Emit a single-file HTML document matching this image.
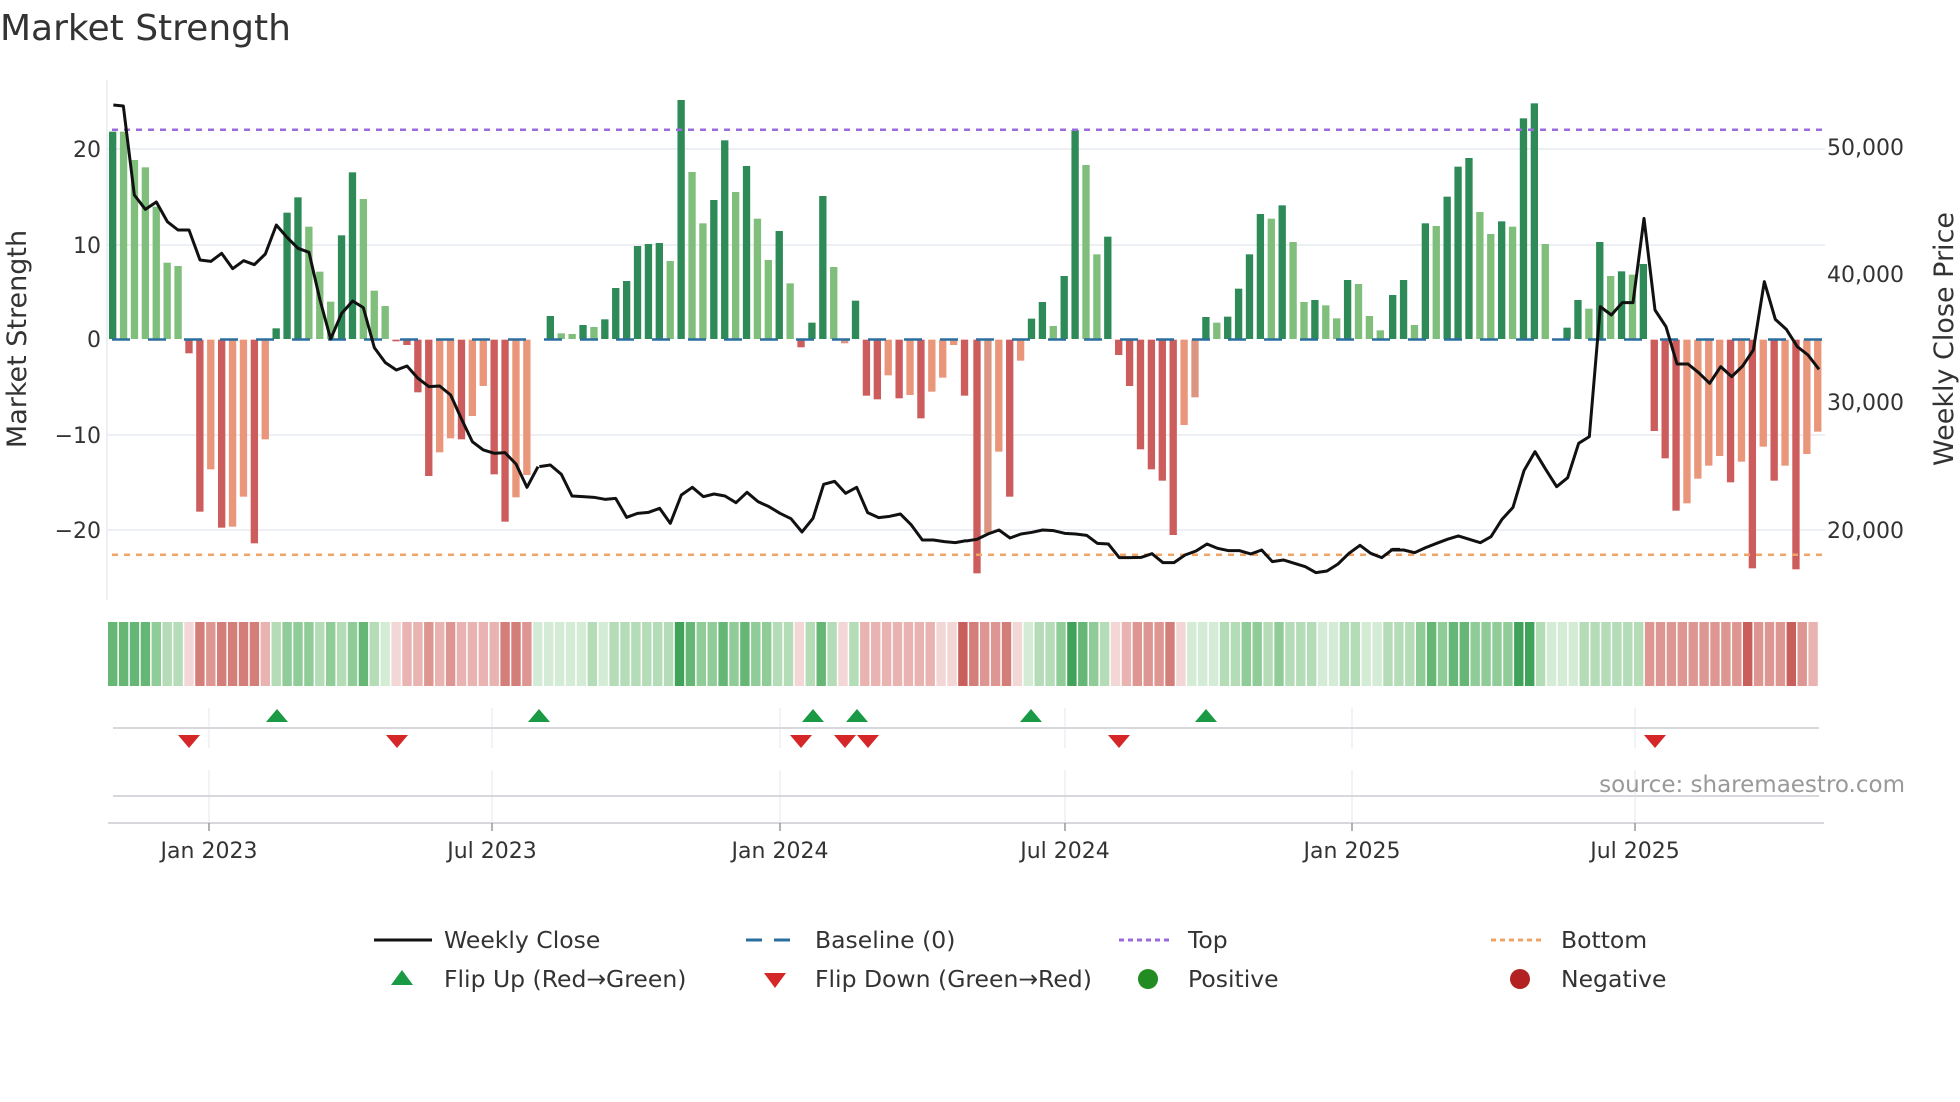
<!DOCTYPE html>
<html><head><meta charset="utf-8"><style>
html,body{margin:0;padding:0;background:#fff}
svg{display:block}
text{font-family:"DejaVu Sans","Liberation Sans",sans-serif;fill:#333}
.D{fill:#2e8b57}.L{fill:#7fbf7b}.R{fill:#cd5c5c}.O{fill:#e9967a}.S{fill:#dc9580}
.g1{fill:#d4ecd6}.g2{fill:#b3dcb7}.g3{fill:#8fcc97}.g4{fill:#66b676}.g5{fill:#41a359}
.r1{fill:#f3d6d6}.r2{fill:#e9b3b1}.r3{fill:#de9692}.r4{fill:#d47e79}.r5{fill:#c95f5a}
</style></head><body>
<svg width="1960" height="1102" viewBox="0 0 1960 1102" xmlns="http://www.w3.org/2000/svg">
<text x="0" y="40" font-size="36">Market Strength</text>

<g stroke="#eceff4" stroke-width="2">
<line x1="107" y1="149" x2="1825" y2="149"/><line x1="107" y1="245" x2="1825" y2="245"/>
<line x1="107" y1="435" x2="1825" y2="435"/><line x1="107" y1="530" x2="1825" y2="530"/>
</g>
<line x1="107" y1="80" x2="107" y2="600" stroke="#eceff4" stroke-width="2"/>

<g transform="translate(100,80) scale(0.33333)">
<rect class="D" x="27" y="155" width="22" height="622"/>
<rect class="L" x="59.7" y="155" width="22" height="622"/>
<rect class="L" x="92.4" y="240" width="22" height="537"/>
<rect class="L" x="125.1" y="262" width="22" height="515"/>
<rect class="L" x="157.8" y="380" width="22" height="397"/>
<rect class="L" x="190.5" y="548" width="22" height="229"/>
<rect class="L" x="223.2" y="558" width="22" height="219"/>
<rect class="R" x="255.9" y="779" width="22" height="41"/>
<rect class="R" x="288.6" y="779" width="22" height="516"/>
<rect class="O" x="321.3" y="779" width="22" height="389"/>
<rect class="R" x="354" y="779" width="22" height="564"/>
<rect class="O" x="386.7" y="779" width="22" height="561"/>
<rect class="O" x="419.4" y="779" width="22" height="471"/>
<rect class="R" x="452.1" y="779" width="22" height="611"/>
<rect class="O" x="484.8" y="779" width="22" height="299"/>
<rect class="D" x="517.5" y="745" width="22" height="32"/>
<rect class="D" x="550.2" y="398" width="22" height="379"/>
<rect class="D" x="582.9" y="352" width="22" height="425"/>
<rect class="L" x="615.6" y="440" width="22" height="337"/>
<rect class="L" x="648.3" y="575" width="22" height="202"/>
<rect class="L" x="681" y="665" width="22" height="112"/>
<rect class="D" x="713.7" y="466" width="22" height="311"/>
<rect class="D" x="746.4" y="277" width="22" height="500"/>
<rect class="L" x="779.1" y="357" width="22" height="420"/>
<rect class="L" x="811.8" y="632" width="22" height="145"/>
<rect class="L" x="844.5" y="678" width="22" height="99"/>
<rect class="R" x="877.2" y="779" width="22" height="5"/>
<rect class="R" x="909.9" y="779" width="22" height="16"/>
<rect class="R" x="942.6" y="779" width="22" height="158"/>
<rect class="R" x="975.3" y="779" width="22" height="409"/>
<rect class="O" x="1008" y="779" width="22" height="338"/>
<rect class="O" x="1040.7" y="779" width="22" height="296"/>
<rect class="R" x="1073.4" y="779" width="22" height="299"/>
<rect class="O" x="1106.1" y="779" width="22" height="229"/>
<rect class="O" x="1138.8" y="779" width="22" height="139"/>
<rect class="R" x="1171.5" y="779" width="22" height="404"/>
<rect class="R" x="1204.2" y="779" width="22" height="546"/>
<rect class="O" x="1236.9" y="779" width="22" height="473"/>
<rect class="O" x="1269.6" y="779" width="22" height="406"/>
</g>
<g transform="translate(530,80) scale(0.33333)">
<rect class="D" x="50" y="708" width="22" height="69"/>
<rect class="L" x="82.7" y="760" width="22" height="17"/>
<rect class="L" x="115.4" y="762" width="22" height="15"/>
<rect class="D" x="148.1" y="735" width="22" height="42"/>
<rect class="L" x="180.8" y="741" width="22" height="36"/>
<rect class="D" x="213.5" y="718" width="22" height="59"/>
<rect class="D" x="246.2" y="624" width="22" height="153"/>
<rect class="D" x="278.9" y="603" width="22" height="174"/>
<rect class="D" x="311.6" y="498" width="22" height="279"/>
<rect class="D" x="344.3" y="492" width="22" height="285"/>
<rect class="D" x="377" y="489" width="22" height="288"/>
<rect class="L" x="409.7" y="543" width="22" height="234"/>
<rect class="D" x="442.4" y="60" width="22" height="717"/>
<rect class="L" x="475.1" y="276" width="22" height="501"/>
<rect class="L" x="507.8" y="430" width="22" height="347"/>
<rect class="D" x="540.5" y="360" width="22" height="417"/>
<rect class="D" x="573.2" y="181" width="22" height="596"/>
<rect class="L" x="605.9" y="336" width="22" height="441"/>
<rect class="D" x="638.6" y="258" width="22" height="519"/>
<rect class="L" x="671.3" y="416" width="22" height="361"/>
<rect class="L" x="704" y="540" width="22" height="237"/>
<rect class="D" x="736.7" y="453" width="22" height="324"/>
<rect class="L" x="769.4" y="610" width="22" height="167"/>
<rect class="R" x="802.1" y="779" width="22" height="23"/>
<rect class="D" x="834.8" y="728" width="22" height="49"/>
<rect class="D" x="867.5" y="348" width="22" height="429"/>
<rect class="L" x="900.2" y="561" width="22" height="216"/>
<rect class="S" x="932.9" y="779" width="22" height="11"/>
<rect class="D" x="965.6" y="662" width="22" height="115"/>
<rect class="R" x="998.3" y="779" width="22" height="168"/>
<rect class="R" x="1031" y="779" width="22" height="179"/>
<rect class="O" x="1063.7" y="779" width="22" height="107"/>
<rect class="R" x="1096.4" y="779" width="22" height="176"/>
<rect class="O" x="1129.1" y="779" width="22" height="166"/>
<rect class="R" x="1161.8" y="779" width="22" height="236"/>
<rect class="O" x="1194.5" y="779" width="22" height="156"/>
<rect class="O" x="1227.2" y="779" width="22" height="114"/>
<rect class="O" x="1259.9" y="779" width="22" height="16"/>
<rect class="R" x="1292.6" y="779" width="22" height="168"/>
</g>
<g transform="translate(960,80) scale(0.33333)">
<rect class="R" x="40" y="779" width="22" height="701"/>
<rect class="S" x="72.7" y="779" width="22" height="581"/>
<rect class="O" x="105.4" y="779" width="22" height="336"/>
<rect class="R" x="138.1" y="779" width="22" height="471"/>
<rect class="O" x="170.8" y="779" width="22" height="63"/>
<rect class="D" x="203.5" y="716" width="22" height="61"/>
<rect class="D" x="236.2" y="666" width="22" height="111"/>
<rect class="L" x="268.9" y="738" width="22" height="39"/>
<rect class="D" x="301.6" y="588" width="22" height="189"/>
<rect class="D" x="334.3" y="150" width="22" height="627"/>
<rect class="L" x="367" y="255" width="22" height="522"/>
<rect class="L" x="399.7" y="523" width="22" height="254"/>
<rect class="D" x="432.4" y="470" width="22" height="307"/>
<rect class="R" x="465.1" y="779" width="22" height="46"/>
<rect class="R" x="497.8" y="779" width="22" height="139"/>
<rect class="R" x="530.5" y="779" width="22" height="329"/>
<rect class="R" x="563.2" y="779" width="22" height="389"/>
<rect class="R" x="595.9" y="779" width="22" height="423"/>
<rect class="R" x="628.6" y="779" width="22" height="586"/>
<rect class="O" x="661.3" y="779" width="22" height="256"/>
<rect class="S" x="694" y="779" width="22" height="173"/>
<rect class="D" x="726.7" y="711" width="22" height="66"/>
<rect class="L" x="759.4" y="728" width="22" height="49"/>
<rect class="D" x="792.1" y="710" width="22" height="67"/>
<rect class="D" x="824.8" y="626" width="22" height="151"/>
<rect class="D" x="857.5" y="523" width="22" height="254"/>
<rect class="D" x="890.2" y="402" width="22" height="375"/>
<rect class="L" x="922.9" y="416" width="22" height="361"/>
<rect class="D" x="955.6" y="376" width="22" height="401"/>
<rect class="L" x="988.3" y="486" width="22" height="291"/>
<rect class="L" x="1021" y="666" width="22" height="111"/>
<rect class="D" x="1053.7" y="660" width="22" height="117"/>
<rect class="L" x="1086.4" y="676" width="22" height="101"/>
<rect class="L" x="1119.1" y="715" width="22" height="62"/>
<rect class="D" x="1151.8" y="600" width="22" height="177"/>
<rect class="L" x="1184.5" y="612" width="22" height="165"/>
<rect class="L" x="1217.2" y="708" width="22" height="69"/>
<rect class="L" x="1249.9" y="751" width="22" height="26"/>
</g>
<g transform="translate(1390,80) scale(0.33333)">
<rect class="D" x="-3" y="645" width="22" height="132"/>
<rect class="D" x="29.7" y="600" width="22" height="177"/>
<rect class="L" x="62.4" y="735" width="22" height="42"/>
<rect class="D" x="95.1" y="430" width="22" height="347"/>
<rect class="L" x="127.8" y="438" width="22" height="339"/>
<rect class="D" x="160.5" y="350" width="22" height="427"/>
<rect class="D" x="193.2" y="260" width="22" height="517"/>
<rect class="D" x="225.9" y="234" width="22" height="543"/>
<rect class="L" x="258.6" y="396" width="22" height="381"/>
<rect class="L" x="291.3" y="462" width="22" height="315"/>
<rect class="D" x="324" y="424" width="22" height="353"/>
<rect class="L" x="356.7" y="440" width="22" height="337"/>
<rect class="D" x="389.4" y="115" width="22" height="662"/>
<rect class="D" x="422.1" y="70" width="22" height="707"/>
<rect class="L" x="454.8" y="492" width="22" height="285"/>
<rect class="D" x="520.2" y="743" width="22" height="34"/>
<rect class="D" x="552.9" y="660" width="22" height="117"/>
<rect class="L" x="585.6" y="686" width="22" height="91"/>
<rect class="D" x="618.3" y="486" width="22" height="291"/>
<rect class="L" x="651" y="588" width="22" height="189"/>
<rect class="D" x="683.7" y="574" width="22" height="203"/>
<rect class="L" x="716.4" y="584" width="22" height="193"/>
<rect class="D" x="749.1" y="552" width="22" height="225"/>
<rect class="R" x="781.8" y="779" width="22" height="274"/>
<rect class="R" x="814.5" y="779" width="22" height="356"/>
<rect class="R" x="847.2" y="779" width="22" height="513"/>
<rect class="O" x="879.9" y="779" width="22" height="491"/>
<rect class="O" x="912.6" y="779" width="22" height="417"/>
<rect class="O" x="945.3" y="779" width="22" height="378"/>
<rect class="O" x="978" y="779" width="22" height="349"/>
<rect class="R" x="1010.7" y="779" width="22" height="428"/>
<rect class="O" x="1043.4" y="779" width="22" height="366"/>
<rect class="R" x="1076.1" y="779" width="22" height="686"/>
<rect class="O" x="1108.8" y="779" width="22" height="321"/>
<rect class="R" x="1141.5" y="779" width="22" height="423"/>
<rect class="O" x="1174.2" y="779" width="22" height="378"/>
<rect class="R" x="1206.9" y="779" width="22" height="689"/>
<rect class="O" x="1239.6" y="779" width="22" height="343"/>
<rect class="O" x="1272.3" y="779" width="22" height="276"/>
</g>

<line x1="112" y1="339.5" x2="1822" y2="339.5" stroke="#2b6f9f" stroke-width="2.5" stroke-dasharray="18 18"/>
<line x1="112" y1="129.7" x2="1822" y2="129.7" stroke="#9b6bdc" stroke-width="2.5" stroke-dasharray="6 6"/>
<line x1="112" y1="554.7" x2="1822" y2="554.7" stroke="#f0a566" stroke-width="2.5" stroke-dasharray="6 6"/>

<g fill="none" stroke="#111" stroke-width="3" stroke-linejoin="round">
<polyline transform="translate(100,80) scale(0.33333)" vector-effect="non-scaling-stroke" points="40,75 70,78 103,345 136,388 169,366 202,425 234,450 267,450 300,540 333,544 365,520 398,566 431,542 463,554 496,522 529,435 561,472 594,505 627,517 660,660 692,777 725,700 758,663 790,683 823,803 856,848 889,870 921,858 954,895 987,920 1019,918 1052,945 1085,1018 1117,1085 1150,1110 1183,1120 1215,1118 1248,1152 1281,1222 1314,1160"/>
<polyline transform="translate(530,80) scale(0.33333)" vector-effect="non-scaling-stroke" points="28,1160 61,1155 94,1183 126,1248 159,1250 192,1252 225,1258 257,1255 290,1312 323,1300 356,1297 389,1285 421,1330 454,1245 487,1222 520,1250 552,1242 585,1248 618,1268 651,1237 684,1265 717,1280 750,1300 783,1316 816,1356 849,1315 881,1213 914,1204 947,1240 980,1222 1013,1298 1046,1313 1079,1309 1111,1302 1144,1335 1177,1380 1210,1380 1243,1385 1276,1388 1309,1382"/>
<polyline transform="translate(960,80) scale(0.33333)" vector-effect="non-scaling-stroke" points="18,1383 51,1378 84,1362 117,1350 150,1374 183,1362 216,1357 248,1350 281,1352 314,1360 347,1362 380,1366 412,1390 445,1392 478,1433 511,1433 544,1432 576,1421 609,1448 642,1448 675,1425 708,1413 741,1392 773,1405 806,1412 839,1412 872,1422 905,1410 937,1445 970,1440 1003,1450 1036,1460 1068,1478 1101,1473 1134,1452 1167,1420 1200,1396 1232,1420 1265,1433 1298,1408 1320,1408"/>
<polyline transform="translate(1390,80) scale(0.33333)" vector-effect="non-scaling-stroke" points="0,1410 41,1410 74,1418 107,1403 140,1390 172,1378 205,1368 238,1378 271,1388 303,1370 336,1318 369,1282 402,1172 435,1115 467,1168 500,1220 533,1193 566,1090 598,1070 631,680 664,705 697,668 729,668 762,415 795,690 828,740 861,852 894,852 926,878 959,910 992,860 1025,890 1058,858 1090,810 1123,605 1156,718 1189,748 1222,800 1254,825 1287,868"/>
</g>

<g font-size="22" text-anchor="end">
<text x="101" y="157">20</text><text x="101" y="253">10</text><text x="101" y="347">0</text>
<text x="101" y="443">−10</text><text x="101" y="538">−20</text>
</g>
<g font-size="22">
<text x="1827" y="155">50,000</text><text x="1827" y="282">40,000</text>
<text x="1827" y="410">30,000</text><text x="1827" y="538">20,000</text>
</g>
<text transform="translate(26,339) rotate(-90)" font-size="27" text-anchor="middle">Market Strength</text>
<text transform="translate(1953,339) rotate(-90)" font-size="27" text-anchor="middle">Weekly Close Price</text>

<g transform="translate(108,622)">
<rect class="g4" x="0" width="9.4" height="64"/><rect class="g4" x="10.9" width="9.4" height="64"/><rect class="g4" x="21.8" width="9.4" height="64"/><rect class="g4" x="32.7" width="9.4" height="64"/><rect class="g3" x="43.6" width="9.4" height="64"/><rect class="g2" x="54.5" width="9.4" height="64"/><rect class="g2" x="65.4" width="9.4" height="64"/><rect class="r1" x="76.3" width="9.4" height="64"/><rect class="r4" x="87.2" width="9.4" height="64"/><rect class="r3" x="98.1" width="9.4" height="64"/>
<rect class="r4" x="109" width="9.4" height="64"/><rect class="r4" x="119.9" width="9.4" height="64"/><rect class="r4" x="130.8" width="9.4" height="64"/><rect class="r4" x="141.7" width="9.4" height="64"/><rect class="r2" x="152.6" width="9.4" height="64"/><rect class="g2" x="163.5" width="9.4" height="64"/><rect class="g3" x="174.4" width="9.4" height="64"/><rect class="g3" x="185.3" width="9.4" height="64"/><rect class="g3" x="196.2" width="9.4" height="64"/><rect class="g2" x="207.1" width="9.4" height="64"/>
<rect class="g3" x="218" width="9.4" height="64"/><rect class="g2" x="228.9" width="9.4" height="64"/><rect class="g3" x="239.8" width="9.4" height="64"/><rect class="g4" x="250.7" width="9.4" height="64"/><rect class="g2" x="261.6" width="9.4" height="64"/><rect class="g1" x="272.5" width="9.4" height="64"/><rect class="r1" x="283.4" width="9.4" height="64"/><rect class="r2" x="294.3" width="9.4" height="64"/><rect class="r2" x="305.2" width="9.4" height="64"/><rect class="r3" x="316.1" width="9.4" height="64"/>
<rect class="r2" x="327" width="9.4" height="64"/><rect class="r3" x="337.9" width="9.4" height="64"/><rect class="r2" x="348.8" width="9.4" height="64"/><rect class="r2" x="359.7" width="9.4" height="64"/><rect class="r2" x="370.6" width="9.4" height="64"/><rect class="r2" x="381.5" width="9.4" height="64"/><rect class="r4" x="392.4" width="9.4" height="64"/><rect class="r4" x="403.3" width="9.4" height="64"/><rect class="r3" x="414.2" width="9.4" height="64"/><rect class="g1" x="425.1" width="9.4" height="64"/>
<rect class="g1" x="436" width="9.4" height="64"/><rect class="g1" x="446.9" width="9.4" height="64"/><rect class="g1" x="457.8" width="9.4" height="64"/><rect class="g1" x="468.7" width="9.4" height="64"/><rect class="g2" x="479.6" width="9.4" height="64"/><rect class="g1" x="490.5" width="9.4" height="64"/><rect class="g2" x="501.4" width="9.4" height="64"/><rect class="g2" x="512.3" width="9.4" height="64"/><rect class="g2" x="523.2" width="9.4" height="64"/><rect class="g2" x="534.1" width="9.4" height="64"/>
<rect class="g2" x="545" width="9.4" height="64"/><rect class="g2" x="555.9" width="9.4" height="64"/><rect class="g5" x="566.8" width="9.4" height="64"/><rect class="g4" x="577.7" width="9.4" height="64"/><rect class="g3" x="588.6" width="9.4" height="64"/><rect class="g3" x="599.5" width="9.4" height="64"/><rect class="g4" x="610.4" width="9.4" height="64"/><rect class="g3" x="621.3" width="9.4" height="64"/><rect class="g4" x="632.2" width="9.4" height="64"/><rect class="g3" x="643.1" width="9.4" height="64"/>
<rect class="g3" x="654" width="9.4" height="64"/><rect class="g2" x="664.9" width="9.4" height="64"/><rect class="g2" x="675.8" width="9.4" height="64"/><rect class="r1" x="686.7" width="9.4" height="64"/><rect class="g2" x="697.6" width="9.4" height="64"/><rect class="g4" x="708.5" width="9.4" height="64"/><rect class="g2" x="719.4" width="9.4" height="64"/><rect class="r1" x="730.3" width="9.4" height="64"/><rect class="g2" x="741.2" width="9.4" height="64"/><rect class="r2" x="752.1" width="9.4" height="64"/>
<rect class="r2" x="763" width="9.4" height="64"/><rect class="r2" x="773.9" width="9.4" height="64"/><rect class="r2" x="784.8" width="9.4" height="64"/><rect class="r2" x="795.7" width="9.4" height="64"/><rect class="r2" x="806.6" width="9.4" height="64"/><rect class="r2" x="817.5" width="9.4" height="64"/><rect class="r1" x="828.4" width="9.4" height="64"/><rect class="r1" x="839.3" width="9.4" height="64"/><rect class="r5" x="850.2" width="9.4" height="64"/><rect class="r4" x="861.1" width="9.4" height="64"/>
<rect class="r3" x="872" width="9.4" height="64"/><rect class="r3" x="882.9" width="9.4" height="64"/><rect class="r4" x="893.8" width="9.4" height="64"/><rect class="r1" x="904.7" width="9.4" height="64"/><rect class="g1" x="915.6" width="9.4" height="64"/><rect class="g2" x="926.5" width="9.4" height="64"/><rect class="g2" x="937.4" width="9.4" height="64"/><rect class="g3" x="948.3" width="9.4" height="64"/><rect class="g5" x="959.2" width="9.4" height="64"/><rect class="g4" x="970.1" width="9.4" height="64"/>
<rect class="g3" x="981" width="9.4" height="64"/><rect class="g2" x="991.9" width="9.4" height="64"/><rect class="r1" x="1002.8" width="9.4" height="64"/><rect class="r2" x="1013.7" width="9.4" height="64"/><rect class="r3" x="1024.6" width="9.4" height="64"/><rect class="r3" x="1035.5" width="9.4" height="64"/><rect class="r3" x="1046.4" width="9.4" height="64"/><rect class="r4" x="1057.3" width="9.4" height="64"/><rect class="r1" x="1068.2" width="9.4" height="64"/><rect class="g1" x="1079.1" width="9.4" height="64"/>
<rect class="g1" x="1090" width="9.4" height="64"/><rect class="g1" x="1100.9" width="9.4" height="64"/><rect class="g2" x="1111.8" width="9.4" height="64"/><rect class="g2" x="1122.7" width="9.4" height="64"/><rect class="g3" x="1133.6" width="9.4" height="64"/><rect class="g3" x="1144.5" width="9.4" height="64"/><rect class="g2" x="1155.4" width="9.4" height="64"/><rect class="g3" x="1166.3" width="9.4" height="64"/><rect class="g2" x="1177.2" width="9.4" height="64"/><rect class="g2" x="1188.1" width="9.4" height="64"/>
<rect class="g2" x="1199" width="9.4" height="64"/><rect class="g1" x="1209.9" width="9.4" height="64"/><rect class="g1" x="1220.8" width="9.4" height="64"/><rect class="g2" x="1231.7" width="9.4" height="64"/><rect class="g2" x="1242.6" width="9.4" height="64"/><rect class="g1" x="1253.5" width="9.4" height="64"/><rect class="g1" x="1264.4" width="9.4" height="64"/><rect class="g2" x="1275.3" width="9.4" height="64"/><rect class="g2" x="1286.2" width="9.4" height="64"/><rect class="g2" x="1297.1" width="9.4" height="64"/>
<rect class="g3" x="1308" width="9.4" height="64"/><rect class="g4" x="1318.9" width="9.4" height="64"/><rect class="g3" x="1329.8" width="9.4" height="64"/><rect class="g4" x="1340.7" width="9.4" height="64"/><rect class="g4" x="1351.6" width="9.4" height="64"/><rect class="g3" x="1362.5" width="9.4" height="64"/><rect class="g3" x="1373.4" width="9.4" height="64"/><rect class="g3" x="1384.3" width="9.4" height="64"/><rect class="g3" x="1395.2" width="9.4" height="64"/><rect class="g5" x="1406.1" width="9.4" height="64"/>
<rect class="g5" x="1417" width="9.4" height="64"/><rect class="g2" x="1427.9" width="9.4" height="64"/><rect class="g1" x="1438.8" width="9.4" height="64"/><rect class="g1" x="1449.7" width="9.4" height="64"/><rect class="g1" x="1460.6" width="9.4" height="64"/><rect class="g2" x="1471.5" width="9.4" height="64"/><rect class="g2" x="1482.4" width="9.4" height="64"/><rect class="g2" x="1493.3" width="9.4" height="64"/><rect class="g2" x="1504.2" width="9.4" height="64"/><rect class="g2" x="1515.1" width="9.4" height="64"/>
<rect class="g2" x="1526" width="9.4" height="64"/><rect class="r3" x="1536.9" width="9.4" height="64"/><rect class="r3" x="1547.8" width="9.4" height="64"/><rect class="r3" x="1558.7" width="9.4" height="64"/><rect class="r3" x="1569.6" width="9.4" height="64"/><rect class="r3" x="1580.5" width="9.4" height="64"/><rect class="r3" x="1591.4" width="9.4" height="64"/><rect class="r3" x="1602.3" width="9.4" height="64"/><rect class="r3" x="1613.2" width="9.4" height="64"/><rect class="r3" x="1624.1" width="9.4" height="64"/>
<rect class="r5" x="1635" width="9.4" height="64"/><rect class="r3" x="1645.9" width="9.4" height="64"/><rect class="r3" x="1656.8" width="9.4" height="64"/><rect class="r3" x="1667.7" width="9.4" height="64"/><rect class="r5" x="1678.6" width="9.4" height="64"/><rect class="r3" x="1689.5" width="9.4" height="64"/><rect class="r2" x="1700.4" width="9.4" height="64"/>
</g>

<g stroke="#eceff4" stroke-width="1.5">
<line x1="209" y1="708" x2="209" y2="748"/><line x1="492" y1="708" x2="492" y2="748"/><line x1="780" y1="708" x2="780" y2="748"/>
<line x1="1065" y1="708" x2="1065" y2="748"/><line x1="1352" y1="708" x2="1352" y2="748"/><line x1="1635" y1="708" x2="1635" y2="748"/>
<line x1="209" y1="770" x2="209" y2="823"/><line x1="492" y1="770" x2="492" y2="823"/><line x1="780" y1="770" x2="780" y2="823"/>
<line x1="1065" y1="770" x2="1065" y2="823"/><line x1="1352" y1="770" x2="1352" y2="823"/><line x1="1635" y1="770" x2="1635" y2="823"/>
</g>
<line x1="113" y1="728" x2="1819" y2="728" stroke="#d6d8dc" stroke-width="2"/>
<line x1="113" y1="796" x2="1819" y2="796" stroke="#d6d8dc" stroke-width="2"/>
<line x1="108" y1="823" x2="1824" y2="823" stroke="#d6d8dc" stroke-width="2"/>
<g stroke="#999" stroke-width="1.5">
<line x1="209" y1="823" x2="209" y2="831"/><line x1="492" y1="823" x2="492" y2="831"/><line x1="780" y1="823" x2="780" y2="831"/>
<line x1="1065" y1="823" x2="1065" y2="831"/><line x1="1352" y1="823" x2="1352" y2="831"/><line x1="1635" y1="823" x2="1635" y2="831"/>
</g>
<g fill="#1a9a44">
<polygon points="266,722 277,709 288,722"/><polygon points="528,722 539,709 550,722"/><polygon points="802,722 813,709 824,722"/>
<polygon points="846,722 857,709 868,722"/><polygon points="1020,722 1031,709 1042,722"/><polygon points="1195,722 1206,709 1217,722"/>
</g>
<g fill="#d62728">
<polygon points="178,735 200,735 189,748"/><polygon points="386,735 408,735 397,748"/><polygon points="790,735 812,735 801,748"/>
<polygon points="834,735 856,735 845,748"/><polygon points="857,735 879,735 868,748"/><polygon points="1108,735 1130,735 1119,748"/>
<polygon points="1644,735 1666,735 1655,748"/>
</g>
<text x="1905" y="792" font-size="23" text-anchor="end" style="fill:#999">source: sharemaestro.com</text>

<g font-size="22" text-anchor="middle">
<text x="209" y="858">Jan 2023</text><text x="492" y="858">Jul 2023</text><text x="780" y="858">Jan 2024</text>
<text x="1065" y="858">Jul 2024</text><text x="1352" y="858">Jan 2025</text><text x="1635" y="858">Jul 2025</text>
</g>

<g font-size="23.5">
<line x1="374" y1="940" x2="432" y2="940" stroke="#111" stroke-width="3"/>
<text x="444" y="948">Weekly Close</text>
<line x1="746" y1="940" x2="800" y2="940" stroke="#2b6f9f" stroke-width="3" stroke-dasharray="16 12"/>
<text x="815" y="948">Baseline (0)</text>
<line x1="1119" y1="940" x2="1172" y2="940" stroke="#9b6bdc" stroke-width="3" stroke-dasharray="5 4"/>
<text x="1188" y="948">Top</text>
<line x1="1491" y1="940" x2="1545" y2="940" stroke="#f0a566" stroke-width="3" stroke-dasharray="5 4"/>
<text x="1561" y="948">Bottom</text>
<polygon points="391,985 402,970 413,985" fill="#1a9a44"/>
<text x="444" y="987">Flip Up (Red→Green)</text>
<polygon points="764,973 786,973 775,988" fill="#d62728"/>
<text x="815" y="987">Flip Down (Green→Red)</text>
<circle cx="1148" cy="979" r="10" fill="#228b22"/>
<text x="1188" y="987">Positive</text>
<circle cx="1520" cy="979" r="10" fill="#b22222"/>
<text x="1561" y="987">Negative</text>
</g>
</svg>
</body></html>
